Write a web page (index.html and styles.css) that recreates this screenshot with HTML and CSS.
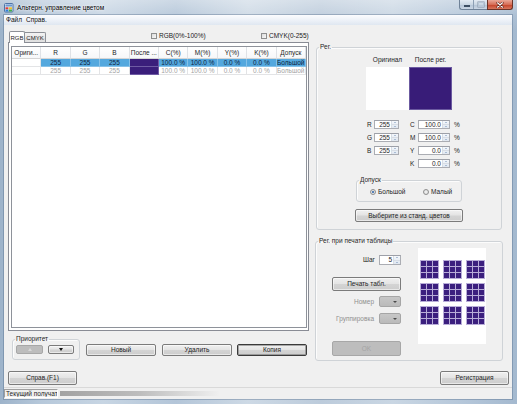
FILE: index.html
```html
<!DOCTYPE html>
<html lang="ru">
<head>
<meta charset="utf-8">
<title>Альтерн. управление цветом</title>
<link rel="stylesheet" href="styles.css">
</head>
<body>
<div class="window">
  <div class="titlebar">
    <svg class="app-icon" viewBox="0 0 10 10" width="10" height="10">
      <rect x="0.5" y="0.5" width="8.5" height="8.5" rx="1" fill="#d9e4f1" stroke="#4f74a6" stroke-width="1"/>
      <rect x="1.5" y="1.5" width="6.5" height="2" fill="#6d97cf"/>
      <rect x="1.5" y="4.3" width="2.8" height="2" fill="#e03a3a"/>
      <rect x="4.8" y="4.3" width="3.2" height="2" fill="#f1c12e"/>
      <rect x="1.5" y="6.6" width="2.8" height="1.9" fill="#2f7fd8"/>
      <rect x="4.8" y="6.6" width="3.2" height="1.9" fill="#43ad4b"/>
    </svg>
    <span class="title">Альтерн. управление цветом</span>
    <div class="caption">
      <div class="cap-group">
        <span class="cap"><i class="min-icon"></i></span>
        <span class="cap cap-max"><i class="max-icon"></i></span>
      </div>
      <span class="cap-close">
        <svg viewBox="0 0 8 6" width="8" height="6"><path d="M1.5 0.8 L6.5 5.2 M6.5 0.8 L1.5 5.2" stroke="#5a1d14" stroke-width="2.2" stroke-linecap="round"/><path d="M1.5 0.8 L6.5 5.2 M6.5 0.8 L1.5 5.2" stroke="#ffffff" stroke-width="1.2" stroke-linecap="round"/></svg>
      </span>
    </div>
  </div>

  <div class="frame">
    <div class="menubar"><span>Файл</span><span>Справ.</span></div>

    <div class="client">
      <div class="main">
        <div class="left">
          <div class="tabrow">
            <div class="tabs">
              <span class="tab tab-active">RGB</span>
              <span class="tab">CMYK</span>
            </div>
            <span class="check check-rgb"><i class="box"></i>RGB(0%-100%)</span>
            <span class="check"><i class="box"></i>CMYK(0-255)</span>
          </div>

          <div class="tabpage">
            <div class="grid">
              <div class="hc">Ориги...</div>
              <div class="hc">R</div>
              <div class="hc">G</div>
              <div class="hc">B</div>
              <div class="hc">После ...</div>
              <div class="hc">C(%)</div>
              <div class="hc">M(%)</div>
              <div class="hc">Y(%)</div>
              <div class="hc">K(%)</div>
              <div class="hc">Допуск</div>

              <div class="c"></div>
              <div class="c sel">255</div>
              <div class="c sel">255</div>
              <div class="c sel">255</div>
              <div class="c purple"></div>
              <div class="c sel">100.0 %</div>
              <div class="c sel">100.0 %</div>
              <div class="c sel">0.0 %</div>
              <div class="c sel">0.0 %</div>
              <div class="c sel">Большой</div>

              <div class="c"></div>
              <div class="c dim">255</div>
              <div class="c dim">255</div>
              <div class="c dim">255</div>
              <div class="c purple"></div>
              <div class="c dim">100.0 %</div>
              <div class="c dim">100.0 %</div>
              <div class="c dim">0.0 %</div>
              <div class="c dim">0.0 %</div>
              <div class="c dim">Большой</div>
            </div>
          </div>

          <div class="actions">
            <fieldset class="group prio">
              <legend>Приоритет</legend>
              <div class="prio-body">
                <span class="btn btn-disabled prio-up"><i class="tri-up"></i></span>
                <span class="btn prio-down"><i class="tri-down"></i></span>
              </div>
            </fieldset>
            <span class="btn act act-first">Новый</span>
            <span class="btn act">Удалить</span>
            <span class="btn act act-last btn-focus">Копия</span>
          </div>
        </div>

        <div class="right">
          <fieldset class="group g-reg">
            <legend>Рег.</legend>
            <div class="sw-labels"><span>Оригинал</span><span>После рег.</span></div>
            <div class="swatches"><span class="sw sw-white"></span><span class="sw sw-purple"></span></div>
            <div class="spins">
              <span class="lbl">R</span>
              <span class="spin"><span class="val">255</span><span class="arrows"><i class="up"></i><i class="down"></i></span></span>
              <span></span>
              <span class="lbl">C</span>
              <span class="spin"><span class="val">100.0</span><span class="arrows"><i class="up"></i><i class="down"></i></span></span>
              <span></span>
              <span class="lbl">%</span>

              <span class="lbl">G</span>
              <span class="spin"><span class="val">255</span><span class="arrows"><i class="up"></i><i class="down"></i></span></span>
              <span></span>
              <span class="lbl">M</span>
              <span class="spin"><span class="val">100.0</span><span class="arrows"><i class="up"></i><i class="down"></i></span></span>
              <span></span>
              <span class="lbl">%</span>

              <span class="lbl">B</span>
              <span class="spin"><span class="val">255</span><span class="arrows"><i class="up"></i><i class="down"></i></span></span>
              <span></span>
              <span class="lbl">Y</span>
              <span class="spin"><span class="val">0.0</span><span class="arrows"><i class="up"></i><i class="down"></i></span></span>
              <span></span>
              <span class="lbl">%</span>

              <span></span>
              <span></span>
              <span></span>
              <span class="lbl">K</span>
              <span class="spin"><span class="val">0.0</span><span class="arrows"><i class="up"></i><i class="down"></i></span></span>
              <span></span>
              <span class="lbl">%</span>
            </div>

            <fieldset class="group tol">
              <legend>Допуск</legend>
              <div class="radios">
                <span class="radio radio-big"><i class="rdot on"></i>Большой</span>
                <span class="radio"><i class="rdot"></i>Малый</span>
              </div>
            </fieldset>

            <span class="btn btn-std">Выберите из станд. цветов</span>
          </fieldset>

          <fieldset class="group g-print">
            <legend>Рег. при печати таблицы</legend>
            <div class="g2body">
              <div class="g2left">
                <div class="frow row-step">
                  <span>Шаг</span>
                  <span class="spin spin-step"><span class="val">5</span><span class="arrows"><i class="up"></i><i class="down"></i></span></span>
                </div>
                <span class="btn btn-print">Печать табл.</span>
                <div class="frow row-combo row-num">
                  <span class="dis">Номер</span>
                  <span class="combo"><i class="tri-down small"></i></span>
                </div>
                <div class="frow row-combo row-grp">
                  <span class="dis">Группировка</span>
                  <span class="combo"><i class="tri-down small"></i></span>
                </div>
                <span class="btn btn-disabled btn-ok">OK</span>
              </div>
              <div class="preview">
                <div class="pgrid">
                  <div class="pg"><i></i><i></i><i></i><i></i><i></i><i></i><i></i><i></i><i></i></div>
                  <div class="pg"><i></i><i></i><i></i><i></i><i></i><i></i><i></i><i></i><i></i></div>
                  <div class="pg"><i></i><i></i><i></i><i></i><i></i><i></i><i></i><i></i><i></i></div>
                  <div class="pg"><i></i><i></i><i></i><i></i><i></i><i></i><i></i><i></i><i></i></div>
                  <div class="pg"><i></i><i></i><i></i><i></i><i></i><i></i><i></i><i></i><i></i></div>
                  <div class="pg"><i></i><i></i><i></i><i></i><i></i><i></i><i></i><i></i><i></i></div>
                  <div class="pg"><i></i><i></i><i></i><i></i><i></i><i></i><i></i><i></i><i></i></div>
                  <div class="pg"><i></i><i></i><i></i><i></i><i></i><i></i><i></i><i></i><i></i></div>
                  <div class="pg"><i></i><i></i><i></i><i></i><i></i><i></i><i></i><i></i><i></i></div>
                </div>
              </div>
            </div>
          </fieldset>
        </div>
      </div>

      <div class="bottom">
        <span class="btn btn-bottom">Справ.(F1)</span>
        <span class="btn btn-bottom">Регистрация</span>
      </div>
    </div>

    <div class="statusbar">
      <span class="sb-panel">Текущий получат.</span>
      <span class="sb-streak"></span>
    </div>
  </div>
</div>
</body>
</html>
```

FILE: styles.css
```css
* { box-sizing: border-box; }

html, body { margin: 0; padding: 0; }

body {
  width: 517px;
  height: 404px;
  overflow: hidden;
  font-family: "Liberation Sans", Arial, sans-serif;
  font-size: 6.5px;
  line-height: 8px;
  color: #1e1e1e;
}

.window {
  height: 404px;
  display: flex;
  flex-direction: column;
  background:
    linear-gradient(180deg, rgba(255,255,255,0.35) 0px, rgba(255,255,255,0.1) 15px, rgba(255,255,255,0) 30px),
    linear-gradient(90deg, #9db3ca 0%, #b6c8da 8%, #c7d5e3 20%, #b3c5d8 34%, #cdd9e5 48%, #bccbdb 62%, #c9d6e3 76%, #b4c6d9 90%, #a4b9cf 100%);
}

/* ---------- title bar ---------- */
.titlebar {
  height: 15px;
  flex-shrink: 0;
  display: flex;
  align-items: center;
}

.app-icon { margin-left: 4px; flex-shrink: 0; }

.title {
  margin-left: 3px;
  color: #000;
  text-shadow: 0 0 3px rgba(255,255,255,0.95), 0 0 2px rgba(255,255,255,0.9);
}

.caption {
  margin-left: auto;
  margin-right: 4px;
  align-self: flex-start;
  display: flex;
  height: 10px;
}

.cap-group {
  display: flex;
  width: 28px;
  border: 1px solid #6f8298;
  border-top: 0;
  border-right: 0;
  border-radius: 0 0 0 3px;
  background: linear-gradient(180deg, #e4ebf3 0%, #cad6e3 50%, #b3c3d5 51%, #cbd7e5 100%);
}

.cap {
  flex: 1;
  display: flex;
  align-items: center;
  justify-content: center;
}

.cap + .cap { border-left: 1px solid #8d9fb4; }

.min-icon {
  width: 6px;
  height: 2px;
  background: #fff;
  border: 0.5px solid #3d4e63;
  margin-top: 3px;
}

.max-icon {
  width: 6px;
  height: 5px;
  border: 1px solid #b8c6d6;
  box-shadow: 0 0 0 0.5px #8896a8;
}

.cap-close {
  width: 26px;
  display: flex;
  align-items: center;
  justify-content: center;
  border: 1px solid #6b3328;
  border-top: 0;
  border-radius: 0 0 3px 0;
  background: linear-gradient(180deg, #eaa898 0%, #d66e57 50%, #c43f26 51%, #d8765c 100%);
}

/* ---------- frame ---------- */
.frame {
  flex: 1;
  display: flex;
  flex-direction: column;
  margin: 0 5px 5px 4px;
  box-shadow: 0 0 0 1px rgba(70, 95, 125, 0.35);
}

.menubar {
  height: 10px;
  flex-shrink: 0;
  display: flex;
  align-items: center;
  gap: 4px;
  padding-left: 2px;
  background: linear-gradient(180deg, #fbfcfe 0%, #eef2f8 50%, #dfe7f1 100%);
  color: #111;
}

.client {
  flex: 1;
  display: flex;
  flex-direction: column;
  background: #f0f0f0;
  padding: 5px 3px 0 4px;
}

.main {
  display: flex;
  gap: 6px;
  margin-right: 6px;
}

.left {
  width: 301px;
  display: flex;
  flex-direction: column;
}

.right {
  width: 188px;
  margin-top: 13px;
  display: flex;
  flex-direction: column;
}

/* ---------- tabs ---------- */
.tabrow {
  height: 12px;
  display: flex;
  align-items: center;
}

.tabs {
  width: 38px;
  height: 12px;
  display: flex;
  align-items: flex-end;
  padding-left: 1px;
  align-self: flex-end;
}

.tab {
  height: 10px;
  width: 21px;
  display: flex;
  align-items: center;
  justify-content: center;
  font-size: 6px;
  border: 1px solid #8d9097;
  border-left: 0;
  border-bottom: 0;
  border-radius: 0 2px 0 0;
  background: linear-gradient(180deg, #f3f3f3 0%, #e9e9e9 50%, #d9d9d9 51%, #e3e3e3 100%);
}

.tab-active {
  width: 16px;
  height: 12px;
  border-left: 1px solid #8d9097;
  border-radius: 2px 2px 0 0;
  background: #fff;
  position: relative;
  top: 1px;
}

.check {
  display: flex;
  align-items: center;
  gap: 2px;
  color: #222;
}

.check-rgb {
  margin-left: 105px;
  width: 110px;
}

.box {
  width: 6px;
  height: 6px;
  border: 1px solid #8e8f8f;
  background: linear-gradient(135deg, #dcdcdc, #f7f7f7);
}

.tabpage {
  height: 289px;
  border: 1px solid #898c95;
  background: #fff;
  padding: 3px 1px 2px 2px;
  display: flex;
  flex-direction: column;
}

.grid {
  flex: 1;
  display: grid;
  grid-template-columns: repeat(10, 1fr);
  grid-template-rows: 12px 8px 8px;
  align-content: start;
  border: 1px solid #8e929a;
  background: #fff;
}

.hc, .c {
  display: flex;
  align-items: center;
  justify-content: center;
  white-space: nowrap;
  overflow: hidden;
  border-right: 1px solid #e3e4e6;
  border-bottom: 1px solid #e3e4e6;
}

.hc {
  background: linear-gradient(180deg, #ffffff 0%, #f6f7f9 100%);
  border-right-color: #dfe2e6;
  border-bottom-color: #d5d5d5;
  color: #1e1e1e;
}

.c { line-height: 7px; }

.c.sel {
  background: #54a8de;
  color: #0e2440;
  border-right-color: #86c1e8;
  border-bottom-color: #86c1e8;
}

.c.purple {
  background: #3a1e7b;
  border-right-color: #6e5aa3;
  border-bottom-color: #6e5aa3;
}

.c.dim { color: #a3a3a3; }

/* ---------- buttons ---------- */
.btn {
  display: flex;
  align-items: center;
  justify-content: center;
  border: 1px solid #7b7b7b;
  border-radius: 2px;
  background: linear-gradient(180deg, #f0f0f0 0%, #e4e4e4 48%, #d4d4d4 52%, #cdcdcd 100%);
  box-shadow: inset 0 0 0 1px rgba(255,255,255,0.55);
  color: #1e1e1e;
  white-space: nowrap;
}

.btn-disabled {
  background: #bdbdbd;
  border-color: #a7a7a7;
  box-shadow: none;
  color: #a4a4a4;
}

.btn-focus {
  border-color: #3a3a3a;
  box-shadow: inset 0 0 0 1px rgba(120,120,120,0.6);
}

.tri-up, .tri-down { display: block; width: 0; height: 0; }

.tri-up {
  border-left: 2px solid transparent;
  border-right: 2px solid transparent;
  border-bottom: 3px solid #d8d8d8;
}

.tri-down {
  border-left: 2.5px solid transparent;
  border-right: 2.5px solid transparent;
  border-top: 3px solid #111;
}

.tri-down.small {
  border-left-width: 2px;
  border-right-width: 2px;
  border-top: 2.5px solid #4a4a4a;
}

/* ---------- group boxes ---------- */
.group {
  margin: 0;
  padding: 0;
  min-width: 0;
  border: 1px solid #cfd3d7;
  border-radius: 3px;
  box-shadow: inset 1px 1px 0 rgba(255,255,255,0.8);
}

.group legend {
  padding: 0 1px;
  margin-left: 2px;
  line-height: 8px;
  font-size: 6.5px;
  color: #1e1e1e;
}

/* ---------- actions row ---------- */
.actions {
  display: flex;
  align-items: flex-start;
  margin-top: 4px;
}

.prio {
  margin-left: 4px;
  width: 68px;
}

.prio-body {
  display: flex;
  gap: 5px;
  padding: 2px 0 5px 3px;
}

.prio-up { width: 27px; height: 9px; }
.prio-down { width: 26px; height: 9px; }

.act {
  width: 70px;
  height: 12px;
  margin-top: 9px;
  margin-left: 6px;
}

.act-last { margin-left: 5px; }

/* ---------- right: Рег. ---------- */
.g-reg {
  margin: 0 1px;
  padding: 0 0 7px 0;
  display: flex;
  flex-direction: column;
  align-items: flex-start;
}

.sw-labels {
  margin-top: 5px;
  margin-left: 49px;
  display: grid;
  grid-template-columns: 43px 43px;
  text-align: center;
  white-space: nowrap;
}

.swatches {
  margin-top: 3px;
  margin-left: 49px;
  display: flex;
}

.sw {
  width: 43px;
  height: 43px;
}

.sw-white { background: #fff; }

.sw-purple {
  background: #381c78;
  border: 1px solid #6b5aa0;
}

.spins {
  margin-top: 10px;
  margin-left: 50px;
  display: grid;
  grid-template-columns: 7px 25px 11px 8px 32px 4px 6px;
  grid-auto-rows: 9px;
  row-gap: 4px;
  align-items: center;
}

.lbl { line-height: 9px; }

.spin {
  height: 9px;
  display: flex;
  border: 1px solid #abadb3;
  border-top-color: #9da0a8;
  background: #fff;
}

.spin .val {
  flex: 1;
  text-align: right;
  line-height: 7px;
  padding-right: 1px;
}

.arrows {
  width: 7px;
  display: flex;
  flex-direction: column;
  border-left: 1px solid #d7dde5;
  background: linear-gradient(180deg, #f4f7fb 0%, #e0e7f0 100%);
}

.arrows i {
  flex: 1;
  display: flex;
  align-items: center;
  justify-content: center;
}

.arrows i + i { border-top: 1px solid #d7dde5; }

.arrows .up::before {
  content: "";
  border-left: 1.5px solid transparent;
  border-right: 1.5px solid transparent;
  border-bottom: 1.5px solid #6d8cb4;
}

.arrows .down::before {
  content: "";
  border-left: 1.5px solid transparent;
  border-right: 1.5px solid transparent;
  border-top: 1.5px solid #6d8cb4;
}

.tol {
  margin-top: 8px;
  margin-left: 39px;
  width: 106px;
}

.radios {
  display: flex;
  padding: 4px 0 5px 13px;
}

.radio {
  display: flex;
  align-items: center;
  gap: 2px;
  height: 8px;
}

.radio-big { width: 53px; }

.rdot {
  width: 6px;
  height: 6px;
  border-radius: 50%;
  border: 1px solid #8e8f8f;
  background: radial-gradient(circle, #f5f5f5 0%, #d6d6d6 100%);
  display: flex;
  align-items: center;
  justify-content: center;
}

.rdot.on::after {
  content: "";
  width: 2.5px;
  height: 2.5px;
  border-radius: 50%;
  background: #245ca5;
}

.btn-std {
  margin-top: 7px;
  margin-left: 38px;
  width: 108px;
  height: 13px;
}

/* ---------- right: print ---------- */
.g-print {
  margin-top: 7px;
  padding: 0 0 4px 0;
}

.g2body {
  display: flex;
  padding-left: 16px;
}

.g2left {
  width: 69px;
  display: flex;
  flex-direction: column;
}

.frow {
  display: flex;
  justify-content: flex-end;
  align-items: center;
  gap: 4px;
}

.row-step { margin-top: 10px; height: 10px; }

.spin-step { width: 22px; height: 10px; }
.spin-step .val { line-height: 8px; }

.btn-print {
  margin-top: 12px;
  height: 14px;
}

.row-combo { height: 11px; gap: 5px; }
.row-num { margin-top: 5px; }
.row-grp { margin-top: 6px; }

.dis { color: #8f8f8f; }

.combo {
  width: 22px;
  height: 11px;
  display: flex;
  align-items: center;
  justify-content: flex-end;
  padding-right: 3px;
  border: 1px solid #a6a6a6;
  border-radius: 2px;
  background: linear-gradient(180deg, #c7c7c7 0%, #bababa 100%);
}

.btn-ok {
  margin-top: 17px;
  height: 15px;
}

.preview {
  margin-left: 17px;
  margin-top: 3px;
  width: 68px;
  height: 96px;
  background: #fff;
  padding: 12px 0 0 2px;
}

.pgrid {
  display: grid;
  grid-template-columns: repeat(3, 19px);
  grid-auto-rows: 19px;
  gap: 4px 4px;
}

.pg {
  display: grid;
  grid-template-columns: repeat(3, 5px);
  grid-auto-rows: 5px;
  gap: 1px;
  padding: 1px;
  background: #b8add8;
}

.pg i {
  display: block;
  background: #3b1f7e;
}

/* ---------- bottom ---------- */
.bottom {
  margin-top: 10px;
  display: flex;
  justify-content: space-between;
}

.btn-bottom {
  width: 69px;
  height: 14px;
}

.statusbar {
  height: 12px;
  flex-shrink: 0;
  display: flex;
  align-items: center;
  background: #f0f0f0;
  border-top: 1px solid #d9d9d9;
}

.sb-panel {
  width: 54px;
  height: 9px;
  line-height: 7px;
  padding-left: 1px;
  border: 1px solid;
  border-color: #a0a0a0 #ffffff #ffffff #a0a0a0;
  white-space: nowrap;
  overflow: hidden;
}

.sb-streak {
  margin-left: 2px;
  width: 160px;
  height: 5px;
  background: linear-gradient(90deg, #a2a2a2 0%, #bdbdbd 50%, rgba(240,240,240,0) 100%);
}
```
